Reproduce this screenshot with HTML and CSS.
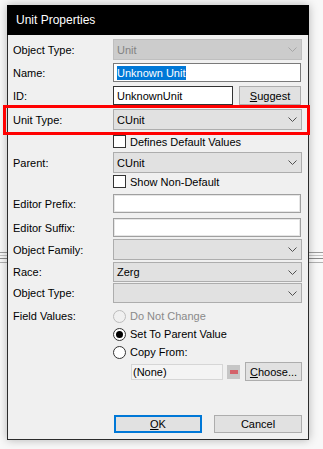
FILE: index.html
```html
<!DOCTYPE html>
<html lang="en">
<head>
    <meta charset="UTF-8">
    <meta name="viewport" content="width=device-width, initial-scale=1.0">
    <title>Unit Properties</title>
    <link rel="stylesheet" href="styles.css">
</head>
<body>
    <div class="dialog">
        <div class="titlebar">Unit Properties</div>
        <div class="content">
            <div class="row mt4 h21">
                <span class="label">Object Type:</span>
                <div class="combo disabled"><span>Unit</span><svg width="9" height="5" viewBox="0 0 9 5"><polyline points="0.5,0.5 4.5,4.5 8.5,0.5" /></svg></div>
            </div>
            <div class="row mt3 h19">
                <span class="label">Name:</span>
                <div class="textbox"><span class="selected">Unknown Unit</span></div>
            </div>
            <div class="row mt4 h19">
                <span class="label">ID:</span>
                <div class="textbox id-box">UnknownUnit</div>
                <button class="btn suggest"><u>S</u>uggest</button>
            </div>
            <div class="row mt4 h21">
                <span class="label">Unit Type:</span>
                <div class="combo"><span>CUnit</span><svg width="9" height="5" viewBox="0 0 9 5"><polyline points="0.5,0.5 4.5,4.5 8.5,0.5" /></svg></div>
            </div>
            <div class="row mt4 h15">
                <span class="label"></span>
                <span class="check"></span><span class="option">Defines Default Values</span>
            </div>
            <div class="row mt3 h21">
                <span class="label">Parent:</span>
                <div class="combo"><span>CUnit</span><svg width="9" height="5" viewBox="0 0 9 5"><polyline points="0.5,0.5 4.5,4.5 8.5,0.5" /></svg></div>
            </div>
            <div class="row mt1 h15">
                <span class="label"></span>
                <span class="check"></span><span class="option">Show Non-Default</span>
            </div>
            <div class="row mt5 h19">
                <span class="label">Editor Prefix:</span>
                <div class="textbox plain"></div>
            </div>
            <div class="row mt5 h19">
                <span class="label">Editor Suffix:</span>
                <div class="textbox plain"></div>
            </div>
            <div class="row mt2 h21">
                <span class="label">Object Family:</span>
                <div class="combo"><span></span><svg width="9" height="5" viewBox="0 0 9 5"><polyline points="0.5,0.5 4.5,4.5 8.5,0.5" /></svg></div>
            </div>
            <div class="row mt2 h20">
                <span class="label">Race:</span>
                <div class="combo"><span>Zerg</span><svg width="9" height="5" viewBox="0 0 9 5"><polyline points="0.5,0.5 4.5,4.5 8.5,0.5" /></svg></div>
            </div>
            <div class="row mt1 h20">
                <span class="label">Object Type:</span>
                <div class="combo"><span></span><svg width="9" height="5" viewBox="0 0 9 5"><polyline points="0.5,0.5 4.5,4.5 8.5,0.5" /></svg></div>
            </div>
            <div class="row mt5 h16">
                <span class="label">Field Values:</span>
                <span class="radio disabled"></span><span class="option muted">Do Not Change</span>
            </div>
            <div class="row mt2 h16">
                <span class="label"></span>
                <span class="radio checked"></span><span class="option">Set To Parent Value</span>
            </div>
            <div class="row mt2 h16">
                <span class="label"></span>
                <span class="radio"></span><span class="option">Copy From:</span>
            </div>
            <div class="row mt2 h19">
                <span class="label"></span>
                <div class="copy-from">
                    <div class="readonly">(None)</div>
                    <span class="clear-btn"><span></span></span>
                    <button class="btn choose"><u>C</u>hoose...</button>
                </div>
            </div>
        </div>
        <div class="footer">
            <button class="btn default"><u>O</u>K</button>
            <button class="btn">Cancel</button>
        </div>
    </div>
    <div class="focus-mark"></div>
</body>
</html>
```

FILE: styles.css
```css
body {
    margin: 0;
    width: 323px;
    height: 449px;
    overflow: hidden;
    font-family: "Liberation Sans", Arial, sans-serif;
    font-size: 11px;
    color: #000;
    background-color: #f8f8f8;
    background-image: linear-gradient(to bottom,
        transparent 252px, #9c9c9c 252px, #9c9c9c 253px,
        transparent 253px, transparent 255px, #c4c4c4 255px, #c4c4c4 256px,
        transparent 256px, transparent 258px, #8a8a8a 258px, #8a8a8a 259px,
        transparent 259px, transparent 262px, #b0b0b0 262px, #b0b0b0 263px,
        transparent 263px);
}
.dialog {
    margin: 5px 0 0 7px;
    width: 302px;
    box-sizing: border-box;
    background: #f0f0f0;
    border: 1px solid #2b2b2b;
    border-top: none;
    box-shadow: 0 0 9px rgba(0, 0, 0, 0.28);
    padding-bottom: 6px;
}
.titlebar {
    height: 30px;
    margin: 0 -1px;
    background: #000;
    color: #fff;
    font-size: 12px;
    line-height: 30px;
    padding-left: 9px;
}
.content {
    padding: 0 6px 0 5px;
}
.row {
    display: flex;
    align-items: center;
}
.mt1 { margin-top: 1px; }
.mt2 { margin-top: 2px; }
.mt3 { margin-top: 3px; }
.mt4 { margin-top: 4px; }
.mt5 { margin-top: 5px; }
.h15 { height: 15px; }
.h16 { height: 16px; }
.h19 { height: 19px; }
.h20 { height: 20px; }
.h21 { height: 21px; }
.label {
    width: 100px;
    flex: none;
}
.combo {
    width: 189px;
    height: 100%;
    box-sizing: border-box;
    display: flex;
    align-items: center;
    justify-content: space-between;
    padding: 0 4px 0 3px;
    background: #e1e1e1;
    border: 1px solid #adadad;
}
.combo svg polyline {
    fill: none;
    stroke: #505050;
    stroke-width: 1;
}
.combo.disabled {
    background: #cccccc;
    border-color: #bfbfbf;
    color: #838383;
}
.combo.disabled svg polyline {
    stroke: #a6a6a6;
}
.textbox {
    width: 188px;
    height: 100%;
    box-sizing: border-box;
    background: #fff;
    border: 1px solid #7a7a7a;
    padding: 1px 3px;
    display: flex;
    align-items: center;
}
.textbox.plain {
    border-color: #a0a0a0;
    box-shadow: inset 0 0 0 1px #e6e6e6;
}
.selected {
    background: #0078d7;
    color: #fff;
    padding: 1px 1px 1px 0;
}
.id-box {
    width: 120px;
    border-color: #333;
}
.btn {
    font-family: inherit;
    font-size: 11px;
    color: #000;
    background: #e1e1e1;
    border: 1px solid #adadad;
    padding: 0;
    height: 100%;
    box-sizing: border-box;
}
.suggest {
    width: 62px;
    margin-left: 6px;
}
.check {
    width: 13px;
    height: 13px;
    box-sizing: border-box;
    background: #fff;
    border: 1px solid #333;
    flex: none;
}
.radio {
    width: 13px;
    height: 13px;
    box-sizing: border-box;
    border-radius: 50%;
    background: #fff;
    border: 1px solid #333;
    flex: none;
    display: flex;
    align-items: center;
    justify-content: center;
}
.radio.disabled {
    border-color: #bcbcbc;
    background: #f0f0f0;
}
.radio.checked::after {
    content: "";
    width: 7px;
    height: 7px;
    border-radius: 50%;
    background: #000;
}
.option {
    margin-left: 4px;
}
.muted {
    color: #8a8a8a;
}
.copy-from {
    display: flex;
    align-items: center;
    height: 100%;
    margin-left: 18px;
}
.readonly {
    width: 92px;
    height: 16px;
    box-sizing: border-box;
    border: 1px solid #d6d6d6;
    background: #f4f4f4;
    padding-left: 1px;
    display: flex;
    align-items: center;
}
.clear-btn {
    width: 13px;
    height: 14px;
    margin-left: 4px;
    background: #c6c6c6;
    display: flex;
    align-items: center;
    justify-content: center;
}
.clear-btn span {
    width: 8px;
    height: 4px;
    background: #d4626a;
}
.choose {
    width: 57px;
    margin-left: 5px;
}
.footer {
    display: flex;
    justify-content: flex-end;
    gap: 12px;
    height: 18px;
    margin-top: 34px;
    padding-right: 6px;
}
.footer .btn {
    width: 88px;
}
.footer .default {
    border: 2px solid #0078d7;
}
.focus-mark {
    position: absolute;
    left: 3px;
    top: 105px;
    width: 307px;
    height: 30px;
    box-sizing: border-box;
    border: 3px solid #ff0000;
}
```
